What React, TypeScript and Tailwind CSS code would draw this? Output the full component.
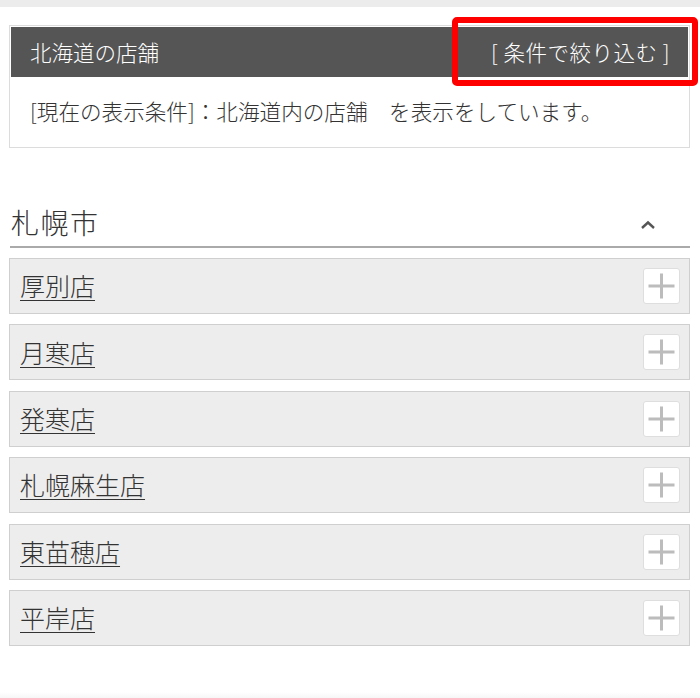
import React from "react";

const stores = ["厚別店", "月寒店", "発寒店", "札幌麻生店", "東苗穂店", "平岸店"];

export default function App() {
  return (
    <div
      className="relative w-[700px] h-[698px] bg-white overflow-hidden text-[#333] font-light"
      style={{ fontFamily: '"Noto Sans CJK JP", "Noto Sans", sans-serif' }}
    >
      <div className="h-[7px] bg-[#ececec]" />
      <div className="ml-[9px] mr-[10px] mt-[18px] border border-[#dcdcdc] p-px">
        <div className="h-[50px] bg-[#555555] flex items-center justify-between pl-[19px] pr-[18px] text-white text-[21.5px]">
          <span>北海道の店舗</span>
          <span className="tracking-[0.5px]">[ 条件で絞り込む ]</span>
        </div>
        <div className="h-[69px] flex items-center pl-[19px] text-[21.6px] text-[#333]">
          [現在の表示条件]：北海道内の店舗　を表示をしています。
        </div>
      </div>

      <div className="mx-[10px] mt-[50px] border-b-2 border-[#aaaaaa] flex items-end justify-between pb-[4px] h-[50px]">
        <span className="text-[28px] leading-none pb-[6px] pl-px tracking-[1.5px]">札幌市</span>
        <svg width="16" height="10" viewBox="0 0 16 10" className="mr-[34px] mb-[12px]">
          <path d="M2 8 L8 2.5 L14 8" fill="none" stroke="#555" strokeWidth="2.4" />
        </svg>
      </div>

      <div className="mt-[10px] ml-[9px] mr-[10px] flex flex-col gap-[10.4px]">
        {stores.map((s) => (
          <div
            key={s}
            className="h-[56px] bg-[#ededed] border border-[#cfcfcf] flex items-center justify-between pl-[10px] pr-[9px]"
          >
            <span className="text-[25px] underline underline-offset-[4px] decoration-1">{s}</span>
            <div className="w-[37px] h-[36px] bg-white border border-[#dedede] rounded-[3px] flex items-center justify-center">
              <svg width="27" height="26" viewBox="0 0 27 26">
                <path d="M13.5 0.5 V25.5 M0.5 13 H26.5" stroke="#bcbcbc" strokeWidth="3" />
              </svg>
            </div>
          </div>
        ))}
      </div>

      <div className="absolute left-0 right-0 bottom-0 h-[6px] bg-gradient-to-b from-white to-[#f6f6f6]" />
      <div className="absolute left-[452px] top-[17px] w-[246px] h-[69px] border-[6px] border-[#ff0000] rounded-[5px]" />
    </div>
  );
}
